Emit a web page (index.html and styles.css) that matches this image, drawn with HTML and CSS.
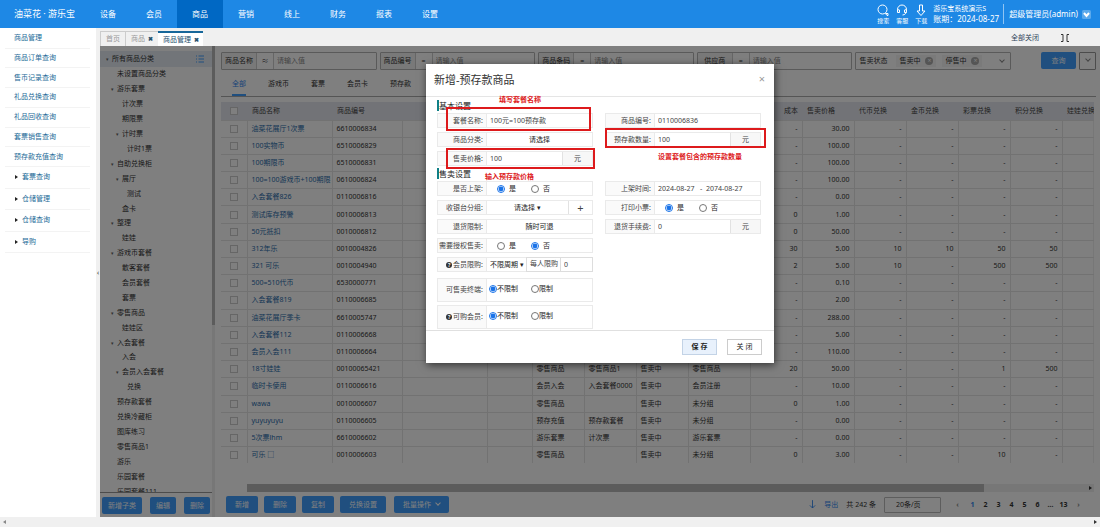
FILE: index.html
```html
<!DOCTYPE html>
<html lang="zh-CN">
<head>
<meta charset="utf-8">
<title>商品管理</title>
<link rel="stylesheet" href="styles.css">
</head>
<body>
<header class="topbar">
  <div class="logo">油菜花 · 游乐宝</div>
  <nav class="nav">
    <a href="#">设备</a><a href="#">会员</a><a href="#" class="active">商品</a><a href="#">营销</a><a href="#">线上</a><a href="#">财务</a><a href="#">报表</a><a href="#">设置</a>
  </nav>
  <div class="tools">
    <a href="#" class="tool"><svg viewBox="0 0 12 12"><circle cx="5.5" cy="5.5" r="4.5"/><path d="M8.5 9.5h2.5v2h-1z"/></svg>搜索</a>
    <a href="#" class="tool"><svg viewBox="0 0 12 12"><path d="M1.5 8.500V5.500a4.500 4.500 0 0 1 9 0v1.500c0 2-1.500 4-4 4M1.500 5.500l2 .5v2.500l-2 0M10.500 5.500l-2 .5v2.500h2"/></svg>客服</a>
    <a href="#" class="tool"><svg viewBox="0 0 12 12"><path d="M4.500 1h3v6h2.500L6 11.500 2 7h2.500z"/></svg>下载</a>
  </div>
  <div class="org"><span class="org-name">游乐宝系统演示S</span><span>账期：2024-08-27</span></div>
  <button class="user">超级管理员(admin)<svg viewBox="0 0 9 9"><rect width="9" height="9" rx="1.500"/><path d="M2 3l2.500 3L7 3"/></svg></button>
</header>

<div class="shell">
  <aside class="sidebar">
    <div class="menu">
      <a href="#">商品管理</a><a href="#">商品订单查询</a><a href="#">售币记录查询</a><a href="#">礼品兑换查询</a><a href="#">礼品回收查询</a><a href="#">套票销售查询</a><a href="#">预存款充值查询</a>
    </div>
    <div class="menu groups">
      <a href="#">套票查询</a><a href="#">仓储管理</a><a href="#">仓储查询</a><a href="#">导购</a>
    </div>
  </aside>
  <button class="collapse" aria-label="收起菜单">‹</button>

  <div class="work">
    <div class="tabs">
      <a href="#">首页</a>
      <a href="#">商品<b>✖</b></a>
      <a href="#" class="active">商品管理<b>✖</b></a>
      <button class="close-all">全部关闭</button>
      <button class="full" aria-label="全屏"><svg viewBox="0 0 10 8"><path d="M1 .5h2v7H1M9 .5H7v7h2"/></svg></button>
    </div>

    <div class="frame">
      <section class="treepane">
        <ul class="tree" id="tree"></ul>
        <div class="tree-actions"><button class="btn wide">新增子类</button><button class="btn">编辑</button><button class="btn">删除</button></div>
      </section>
      <div class="splitter"><div class="thumb"></div></div>

      <main class="main">
        <form class="filters">
          <div class="filter"><label for="f1">商品名称</label><span class="op">≈</span><input id="f1" placeholder="请输入值"></div>
          <div class="filter"><label for="f2">商品编号</label><span class="op">=</span><input id="f2" placeholder="请输入值"></div>
          <div class="filter"><label for="f3">商品条码</label><span class="op">=</span><input id="f3" placeholder="请输入值"></div>
          <div class="filter"><label for="f4">供应商</label><span class="op">=</span><input id="f4" placeholder="请输入值"></div>
          <div class="filter status"><span class="lab">售卖状态</span><span class="tag">售卖中<i>×</i></span><span class="tag">停售中<i>×</i></span><span class="chev"></span></div>
          <button type="button" class="btn query">查询</button>
          <button type="button" class="more" aria-label="更多条件"><span class="chev"></span></button>
        </form>
        <nav class="kinds"><a href="#" class="active">全部</a><a href="#">游戏币</a><a href="#">套票</a><a href="#">会员卡</a><a href="#">预存款</a></nav>

        <div class="grid-wrap">
          <table class="goods">
            <colgroup><col class="c26"><col class="c85"><col class="c70"><col class="c85"><col class="c45"><col class="c52"><col class="c52"><col class="c52"><col class="c62"><col class="c52"><col class="c52"><col class="c52"><col class="c52"><col class="c52"><col class="c52"><col></colgroup>
            <thead><tr><th><input type="checkbox" aria-label="全选"></th><th>商品名称</th><th>商品编号</th><th></th><th></th><th>商品类型</th><th>商品分类</th><th>售卖状态</th><th>收银台分组</th><th class="n">成本</th><th>售卖价格</th><th>代币兑换</th><th>金币兑换</th><th>彩票兑换</th><th>积分兑换</th><th>娃娃兑换</th></tr></thead>
            <tbody id="rows"></tbody>
          </table>
        </div>
        <div class="hscroll"><div class="hthumb"></div><span class="harrow"></span></div>
        <div class="actions">
          <button class="btn">新增</button><button class="btn">删除</button><button class="btn">复制</button><button class="btn long">兑换设置</button><button class="btn batch">批量操作<span class="chev"></span></button>
          <div class="pager">
            <a href="#" class="export"><svg viewBox="0 0 8 10"><path d="M4 0v9M1 6l3 3 3-3"/></svg>导出</a>
            <span>共 242 条</span>
            <select aria-label="每页条数"><option>20条/页</option></select>
            <nav class="pages"><a href="#" class="dim">‹</a><a href="#" class="active">1</a><a href="#">2</a><a href="#">3</a><a href="#">4</a><a href="#">5</a><a href="#">6</a><span>…</span><a href="#">13</a><a href="#" class="dim">›</a></nav>
          </div>
        </div>
      </main>

      <div class="mask">
        <div class="dialog" role="dialog" aria-labelledby="dlg">
          <div class="dialog-head"><h2 id="dlg">新增-预存款商品</h2><button class="x" aria-label="关闭">×</button></div>
          <div class="dialog-body">
            <h3>基本设置</h3>
            <div class="cols">
              <div class="col">
                <div class="row"><label for="a1">套餐名称:</label><input id="a1" value="100元=100预存款"></div>
                <div class="row"><span class="lab">商品分类:</span><button class="pick">请选择</button></div>
                <div class="row"><label for="a3">售卖价格:</label><input id="a3" value="100"><span class="unit">元</span></div>
              </div>
              <div class="col">
                <div class="row"><label for="a4">商品编号:</label><input id="a4" value="0110006836"></div>
                <div class="row"><label for="a5">预存款数量:</label><input id="a5" value="100"><span class="unit">元</span></div>
              </div>
            </div>
            <h3>售卖设置</h3>
            <div class="cols">
              <div class="col">
                <div class="row"><span class="lab">是否上架:</span><span class="radios"><label><input type="radio" name="r1" checked>是</label><label><input type="radio" name="r1">否</label></span></div>
                <div class="row"><label for="b2">收银台分组:</label><select id="b2" class="grow"><option>请选择 ▾</option></select><button class="unit plus">+</button></div>
                <div class="row"><span class="lab">退货限制:</span><button class="pick">随时可退</button></div>
                <div class="row"><span class="lab">需要授权售卖:</span><span class="radios"><label><input type="radio" name="r2">是</label><label><input type="radio" name="r2" checked>否</label></span></div>
                <div class="row limit"><label for="b5"><i class="help">?</i>会员限购:</label><select id="b5"><option>不限周期 ▾</option></select><label for="b6" class="per">每人限购</label><input id="b6" class="count" value="0"></div>
              </div>
              <div class="col">
                <div class="row"><label for="b7">上架时间:</label><input id="b7" class="range" value="2024-08-27   -  2074-08-27"></div>
                <div class="row"><span class="lab">打印小票:</span><span class="radios"><label><input type="radio" name="r3" checked>是</label><label><input type="radio" name="r3">否</label></span></div>
                <div class="row"><label for="b9">退货手续费:</label><input id="b9" value="0"><span class="unit">元</span></div>
              </div>
            </div>
            <div class="cols tallset">
              <div class="col">
                <div class="row tall"><span class="lab">可售卖终端:</span><span class="radios tight"><label><input type="radio" name="r4" checked>不限制</label><label><input type="radio" name="r4">限制</label></span></div>
                <div class="row tall"><span class="lab"><i class="help">?</i> 可购会员:</span><span class="radios tight"><label><input type="radio" name="r5" checked>不限制</label><label><input type="radio" name="r5">限制</label></span></div>
              </div>
            </div>
          </div>
          <div class="dialog-foot"><button class="save">保 存</button><button class="cancel">关 闭</button></div>

          <div class="mark m1"></div><div class="mark m2"></div><div class="mark m3"></div>
          <span class="note n1">填写套餐名称</span><span class="note n2">设置套餐包含的预存款数量</span><span class="note n3">输入预存款价格</span>
        </div>
      </div>
    </div>
  </div>
</div>
<div class="bottom-scroll"><span class="larr"></span><span class="harrow"></span></div>
<script src="app.js"></script>
</body>
</html>
```

FILE: styles.css
```css
* { box-sizing: border-box; }
body {
  margin: 0;
  height: 100vh;
  display: flex;
  flex-direction: column;
  overflow: hidden;
  font: 7px/10px "Noto Sans", "Noto Sans CJK SC", sans-serif;
  color: #333;
  background: #fff;
}
button, input, select { font: inherit; color: inherit; margin: 0; padding: 0; border: 0; background: none; outline: 0; }
select { appearance: none; }
a { color: inherit; text-decoration: none; }
ul { list-style: none; margin: 0; padding: 0; }
svg { fill: none; stroke: currentColor; display: block; }

.topbar { display: flex; align-items: center; height: 28px; flex: none; background: #1e88e5; color: #fff; font-size: 8px; padding-right: 9px; }
.logo { width: 85px; padding-left: 14px; font-size: 9px; white-space: nowrap; }
.nav { display: flex; flex: 1; align-self: stretch; }
.nav a { width: 46px; display: flex; align-items: center; justify-content: center; }
.nav .active { background: #0068c4; }
.tools { display: flex; gap: 7px; }
.tool { width: 12px; display: flex; flex-direction: column; align-items: center; gap: 1px; font-size: 6px; line-height: 8px; white-space: nowrap; }
.tool svg { width: 12px; height: 12px; }
.org { display: flex; flex-direction: column; width: 71px; margin-left: 6px; border-right: 1px solid #8fc4f3; white-space: nowrap; }
.org-name { font-size: 7px; }
.user { display: flex; align-items: center; gap: 4px; margin-left: 5px; white-space: nowrap; }
.user svg { width: 9px; height: 9px; stroke: #fff; stroke-width: 2; }
.user rect { fill: #5aa9ec; stroke: none; }

.shell { flex: 1; display: flex; min-height: 0; }
.sidebar { width: 96px; padding: 1px 6px 0 5px; color: #1b6a97; }
.menu { display: grid; grid-auto-rows: 1fr; height: 138px; }
.menu a { display: flex; align-items: center; padding-left: 9px; border-bottom: 1px solid #f3f3f3; }
.groups { height: 86px; }
.groups a::before { content: ""; border: 2px solid transparent; border-left: 3px solid #222; border-right: 0; margin: 0 4px 0 1px; }
.collapse { width: 4px; background: #f0f0f0; color: #333; overflow: hidden; }

.work { flex: 1; min-width: 0; display: flex; flex-direction: column; }
.tabs { height: 18px; display: flex; align-items: flex-end; background: #f0f0f0; padding-right: 30px; }
.tabs a { height: 15px; display: flex; align-items: center; padding: 0 5px; color: #999; border: 1px solid #ccc; border-width: 1px 0 0 1px; }
.tabs .active { background: #fff; color: #1d4f6e; border: 0; border-top: 2px solid #17679a; padding: 0 4px 0 5px; }
.tabs b { font-size: 6px; color: #24506c; margin-left: 3px; }
.close-all { margin-left: auto; align-self: center; color: #2c4458; padding-top: 1px; }
.full { margin: 0 0 4px 21px; }
.full svg { width: 10px; height: 8px; }

.frame { flex: 1; min-height: 0; display: flex; position: relative; background: #fff; }
.treepane { width: 112px; display: flex; flex-direction: column; min-height: 0; padding-top: 5px; }
.tree { flex: 1; min-height: 0; display: grid; grid-auto-rows: 1fr; overflow: hidden; grid-template-rows: 16px; margin-bottom: -7px; }
.tree li { display: flex; align-items: center; white-space: nowrap; min-height: 0; }
.tree li::before { content: ""; width: 6px; margin-left: 6px; flex: none; }
.tree .open::before { content: "▾"; font-size: 5px; color: #666; }
.tree .l2 { padding-left: 5px; }
.tree .l3 { padding-left: 10px; }
.tree .l4 { padding-left: 15px; }
.tree .sel { background: #e4ebf3; }
.tree svg { width: 8px; height: 8px; margin: 0 8px 0 auto; color: #409eff; }
.tree-actions { display: flex; gap: 8px; padding: 4px 2px 3px; border-top: 1px solid #999; background: #fff; z-index: 0; }
.btn { height: 17px; min-width: 26px; border-radius: 2px; background: #409eff; color: #fff; white-space: nowrap; }
.btn.wide { width: 40px; }
.splitter { width: 3px; background: #eee; }
.thumb { height: 279px; background: #b8b8b8; }

.main { flex: 1; min-width: 0; display: flex; flex-direction: column; padding: 6px 0 4px 6px; }
.filters { display: grid; grid-template-columns: repeat(5, minmax(0, 1fr)) 62px 17px; gap: 3px; padding-right: 4px; height: 18px; }
.filter { display: flex; align-items: center; border: 1px solid #b4b4b4; border-radius: 1px; white-space: nowrap; }
.filter label { width: 35px; align-self: stretch; display: flex; align-items: center; justify-content: center; background: #f2f2f2; border-right: 1px solid #ccc; }
.op { width: 17px; text-align: center; border-right: 1px solid #ccc; line-height: 16px; }
.filter input { flex: 1; min-width: 0; padding-left: 3px; }
.filter input::placeholder { color: #888; opacity: 1; }
.status { gap: 6px; padding: 0 6px 0 3px; }
.status .lab { margin-right: 3px; }
.tag { display: flex; align-items: center; gap: 5px; padding: 0 3px; background: #f4f4f5; line-height: 12px; }
.tag i { width: 8px; height: 8px; border-radius: 50%; background: #aaa; color: #fff; line-height: 8px; text-align: center; font-style: normal; }
.chev { width: 4px; height: 4px; border: solid #888; border-width: 0 1px 1px 0; rotate: 45deg; margin-bottom: 2px; display: inline-block; }
.status .chev { margin-left: auto; }
.query { width: 35px; justify-self: end; }
.more { border: 1px solid #999; border-radius: 1px; }
.kinds { display: flex; gap: 22px; margin: 5px 4px 0 0; padding-left: 11px; border-bottom: 1px solid #aaa; }
.kinds a { line-height: 18px; padding-bottom: 3px; }
.kinds .active { color: #2f86ef; box-shadow: 0 -2px 0 #409eff inset; }

.grid-wrap { margin: 5px 6px 0 0; flex: 1; min-height: 0; padding-bottom: 21px; }
.goods { width: 100%; height: 100%; table-layout: fixed; border-collapse: collapse; }
.goods th { font-weight: 400; text-align: left; background: #e4e7ee; color: #444; height: 18px; }
.goods th, .goods td { padding: 0 4px; white-space: nowrap; overflow: hidden; line-height: 8px; border-bottom: 1px solid #e4e4e4; }
.goods th { padding-left: 5px; }
.goods td { border-right: 1px solid #e4e4e4; }
.goods td:nth-child(2) { color: #2a6cab; }
.goods td:nth-child(1), .goods th:nth-child(1) { padding: 0 0 0 9px; }
.goods .n { text-align: right; }
.goods td:last-child { border-right-color: #eee; }
.goods input { appearance: none; width: 8px; height: 8px; border: 1px solid #ccc; display: block; background: #fff; }
.goods tbody tr:last-child td { border-bottom: 0; }
.c26 { width: 26px; } .c45 { width: 45px; } .c52 { width: 52px; } .c62 { width: 62px; } .c70 { width: 70px; } .c85 { width: 85px; }
.hscroll { display: flex; align-items: center; justify-content: space-between; margin: 0 6px 0 26px; height: 8px; background: #eee; }
.hthumb { width: 87%; height: 8px; background: #b8b8b8; }
.harrow { border: 2px solid transparent; border-left: 3px solid #333; border-right: 0; margin-right: 2px; }
.actions { display: flex; align-items: center; gap: 6px; padding: 4px 13px 0 5px; }
.actions .btn { width: 32px; }
.actions .long { width: 46px; }
.actions .batch { width: 55px; margin-left: 2px; }
.batch .chev { border-color: #fff; margin-left: 5px; }
.pager { margin-left: auto; display: flex; align-items: center; gap: 8px; }
.export { display: flex; align-items: center; gap: 8px; color: #2f86ef; }
.export svg { width: 7px; height: 9px; }
.pager select { width: 57px; height: 16px; border: 1px solid #bbb; border-radius: 1px; padding-left: 11px; }
.pages { display: flex; font-weight: 700; }
.pages > * { width: 13px; text-align: center; }
.pages .dim { color: #888; width: 17px; }
.pages .active { color: #2f86ef; }

.mask { position: absolute; inset: 0; z-index: 1; background: rgba(0,0,0,.5); display: flex; justify-content: center; align-items: flex-start; padding-top: 18px; }
.dialog { position: relative; width: 348px; background: #fff; box-shadow: 1px 2px 8px rgba(0,0,0,.6); }
.dialog-head { display: flex; align-items: center; justify-content: space-between; height: 33px; padding: 0 9px 0 8px; border-bottom: 1px solid #e5e5e5; }
.dialog-head h2 { margin: 0; font-size: 11px; font-weight: 400; }
.x { color: #999; font-size: 11px; padding-bottom: 3px; }
.dialog-body { padding: 1px 13px 0 11px; }
.dialog h3 { font-size: 8px; font-weight: 400; line-height: 11px; border-left: 2px solid #0f7f86; color: #222; margin: 2px 0; }
.cols { display: grid; grid-template-columns: repeat(2, minmax(0, 1fr)); gap: 12px; }
.col { display: flex; flex-direction: column; gap: 4px; }
.row { height: 15px; display: flex; align-items: stretch; border: 1px solid #eaeaea; white-space: nowrap; color: #444; }
.row > label:first-child, .row > .lab { width: 49px; flex: none; display: flex; align-items: center; justify-content: flex-end; padding-right: 3px; background: #fafafa; border-right: 1px solid #eaeaea; }
.row > input { flex: 1; min-width: 0; padding-left: 3px; }
.pick { flex: 1; color: #222; }
.grow { flex: 1; min-width: 0; text-align-last: center; color: #222; }
.unit { width: 30px; flex: none; display: flex; align-items: center; justify-content: center; background: #f7f7f7; border-left: 1px solid #e2e2e2; }
.plus { width: 24px; font-size: 11px; background: #fff; }
.radios { display: flex; align-items: center; gap: 15px; padding-left: 10px; }
.radios label { display: flex; align-items: center; gap: 4px; color: #222; }
.radios input { width: 8px; height: 8px; accent-color: #1a73e8; }
.tight { padding: 0 0 3px 2px; gap: 13px; }
.tight label { gap: 0; }
.limit select { width: 39px; padding-left: 3px; color: #222; }
.per { border: 1px solid #ddd; border-right: 0; margin: -1px 0; padding: 1px 3px 0; }
.row > .count { border: 1px solid #ddd; margin: -1px; }
.help { width: 6px; height: 6px; border-radius: 50%; background: #333; color: #fff; font: 700 5px/6px "Noto Sans", sans-serif; text-align: center; margin-right: 1px; }
.range { white-space: pre; }
.tallset { margin-top: 6px; }
.tall { height: 24px; }
.tallset .col { gap: 3px; }
.dialog-foot { display: flex; justify-content: flex-end; gap: 10px; padding: 8px 12px 8px; margin-top: 1px; border-top: 1px solid #e0e0e0; }
.dialog-foot button { width: 35px; height: 16px; border: 1px solid #ccc; background: #fff; color: #222; }
.dialog-foot .save { background: #e8f1fc; border-color: #c3d3e6; font-weight: 700; }

/* callouts drawn over the form */
.mark { position: absolute; border: 2px solid #dd1a1c; pointer-events: none; }
.m1 { left: 20px; top: 43px; width: 145px; height: 24px; }
.m2 { left: 20px; top: 84px; width: 149px; height: 21px; }
.m3 { left: 179px; top: 64px; width: 161px; height: 20px; }
.note { position: absolute; color: #dd1a1c; font-weight: 700; white-space: nowrap; }
.n1 { left: 73px; top: 31px; }
.n2 { left: 232px; top: 88px; }
.n3 { left: 59px; top: 108px; }

.bottom-scroll { height: 10px; flex: none; background: #f0f0f0; display: flex; align-items: center; justify-content: space-between; padding: 0 1px 0 3px; }
.larr { border: 2px solid transparent; border-right: 3px solid #888; border-left: 0; }
```

FILE: app.js
```js
const tree = [
  [1, '所有商品分类', 1], [2, '未设置商品分类'], [2, '游乐套票', 1], [3, '计次票'], [3, '期限票'], [3, '计时票', 1],
  [4, '计时1票'], [2, '自助兑换柜', 1], [3, '展厅', 1], [4, '测试'], [3, '盒卡'], [2, '整理', 1], [3, '娃娃'],
  [2, '游戏币套餐', 1], [3, '散客套餐'], [3, '会员套餐'], [3, '套票'], [2, '零售商品', 1], [3, '娃娃区'],
  [2, '入会套餐', 1], [3, '入会'], [3, '会员入会套餐', 1], [4, '兑换'], [2, '预存款套餐'], [2, '兑换冷藏柜'],
  [2, '图库练习'], [2, '零售商品1'], [2, '游乐'], [2, '乐园套餐'], [2, '乐园套餐111']
];
const listIcon = '<svg viewBox="0 0 8 8"><path d="M0 1h1M2.5 1H8M0 4h1M2.500 4H8M0 7h1M2.500 7H8"/></svg>';
document.getElementById('tree').innerHTML = tree.map(([level, text, open], i) =>
  `<li class="l${level}${open ? ' open' : ''}${i ? '' : ' sel'}">${text}${i ? '' : listIcon}</li>`).join('');

// name, code, type, category, status, group, cost, price, token, coin, ticket, points
const goods = `油菜花展厅1次票|6610006834|||||-|30.00|-|-|-|-
100实物币|6510006829|||||-|100.00|-|-|-|-
100期限币|6510006831|||||-|100.00|-|-|-|-
100=100游戏币+100期限|0610006824|||||-|100.00|-|-|-|-
入会套餐826|0110006816|||||-|0.00|-|-|-|-
测试库存预警|0010006813|||||0|1.00|-|-|-|-
50元抵扣|0010006812|||||0|50.00|-|-|-|-
312年乐|0010004826|||||30|5.00|10|10|50|50
321 可乐|0010004940|||||2|5.00|10|-|500|500
500=510代币|6530000771|||||-|0.10|-|-|-|-
入会套餐819|0110006685|||||-|2.00|-|-|-|-
油菜花展厅季卡|6610005747|||||-|288.00|-|-|-|-
入会套餐112|0110006668|||||-|5.00|-|-|-|-
会员入会111|0110006664|||||-|110.00|-|-|-|-
18寸娃娃|00100065421|零售商品|零售商品1|售卖中|零售商品|20|50.00|-|-|1|500
临时卡使用|0110006616|会员入会|入会套餐0000|售卖中|会员注册|-|10.00|-|-|-|-
wawa|0010006607|零售商品||售卖中|未分组|0|1.00|-|-|-|-
yuyuyuyu|0110006605|预存充值|预存款套餐|售卖中|未分组|-|0.00|-|-|-|-
5次票lhm|6610006602|游乐套票|计次票|售卖中|游乐套票|-|0.00|-|-|-|-
可乐 □|0010006603|零售商品||售卖中|未分组|0|3.00|-|-|10|-`;
document.getElementById('rows').innerHTML = goods.split('\n').map(line => {
  const v = line.split('|');
  const cells = [v[0], v[1], '', '', ...v.slice(2), ''];
  return `<tr><td><input type="checkbox" aria-label="${v[0]}"></td>` +
    cells.map((c, i) => `<td${i > 7 ? ' class="n"' : ''}>${c}</td>`).join('') + '</tr>';
}).join('');
```
